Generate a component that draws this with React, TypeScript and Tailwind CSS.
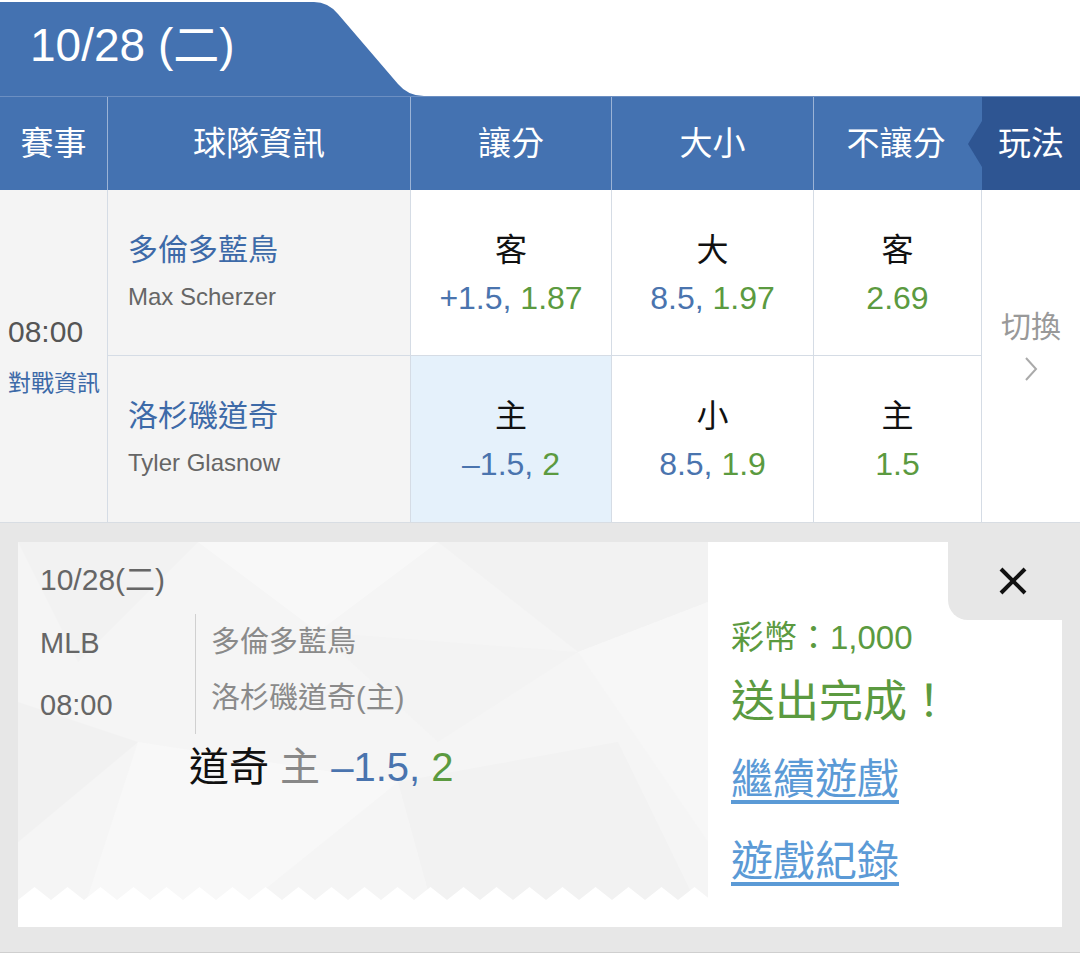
import React from "react";

const FONT = { fontFamily: '"Liberation Sans", "Noto Sans CJK TC", sans-serif' };

function Zigzag() {
  const w = 690;
  const top = 345;
  const bot = 358;
  const period = 33;
  let pts = `0,${bot} `;
  for (let x = 0; x <= w + period; x += period) {
    pts += `${x},${bot} ${x + period / 2},${top} `;
  }
  pts += `${w},${bot} ${w},385 0,385`;
  return <polygon points={pts} fill="#ffffff" />;
}

function TicketBg() {
  return (
    <svg className="absolute inset-0" width="690" height="385" viewBox="0 0 690 385">
      <rect width="690" height="385" fill="#f5f5f5" />
      <polygon points="0,0 180,0 60,120" fill="#f2f2f2" />
      <polygon points="180,0 420,0 300,90" fill="#f8f8f8" />
      <polygon points="420,0 690,0 690,60 560,110" fill="#f2f2f2" />
      <polygon points="0,160 120,200 0,300" fill="#f1f1f1" />
      <polygon points="120,200 380,240 200,385 60,385" fill="#f8f8f8" />
      <polygon points="380,240 600,200 690,385 420,385" fill="#f2f2f2" />
      <polygon points="560,110 690,60 690,300" fill="#f7f7f7" />
      <polygon points="300,90 560,110 420,200" fill="#f3f3f3" />
      <Zigzag />
    </svg>
  );
}

export default function App() {
  return (
    <div className="w-[1080px] h-[959px] bg-white overflow-hidden" style={FONT}>
      {/* Tab */}
      <div className="flex h-[96px] pt-[2px]">
        <div className="w-[300px] h-[94px] bg-[#4472b1] pl-[30px] flex items-center">
          <span className="text-white text-[46px] leading-none pb-[8px]">10/28 (二)</span>
        </div>
        <svg width="130" height="94" viewBox="0 0 130 94" className="block">
          <path d="M0,0 L14,0 Q28,0 38,12 L98,82 Q108,94 124,94 L0,94 Z" fill="#4472b1" />
        </svg>
      </div>

      {/* Header */}
      <div className="grid grid-cols-[108px_303px_201px_202px_168px_98px] h-[94px] bg-[#4472b1] text-white text-[33px] border-t border-[#6c8fc2]">
        <div className="flex items-center justify-center border-r border-[#9bb3d6]">賽事</div>
        <div className="flex items-center justify-center border-r border-[#9bb3d6]">球隊資訊</div>
        <div className="flex items-center justify-center border-r border-[#9bb3d6]">讓分</div>
        <div className="flex items-center justify-center border-r border-[#9bb3d6]">大小</div>
        <div className="flex items-center justify-center pr-[4px]">不讓分</div>
        <div className="relative flex items-center justify-center bg-[#2e5592]">
          <div className="absolute left-[-14px] top-[24px] w-0 h-0 border-y-[23px] border-y-transparent border-r-[14px] border-r-[#2e5592]" />
          玩法
        </div>
      </div>

      {/* Body */}
      <div className="grid grid-cols-[108px_303px_201px_202px_168px_98px] grid-rows-[166px_166px] border-b border-[#d8dde3]">
        <div className="row-span-2 bg-[#f4f4f4] border-r border-[#d5dce5] flex flex-col justify-center pl-[8px]">
          <div className="text-[30px] text-[#555] leading-[36px]">08:00</div>
          <div className="text-[23px] text-[#3d6aa8] leading-[32px] mt-[17px]">對戰資訊</div>
        </div>

        <div className="bg-[#f4f4f4] border-r border-b border-[#d5dce5] pl-[20px] pt-[40px]">
          <div className="text-[30px] text-[#3d6aa8] leading-[40px]">多倫多藍鳥</div>
          <div className="text-[24px] text-[#666] leading-[30px] mt-[12px]">Max Scherzer</div>
        </div>
        <div className="bg-white border-r border-b border-[#d5dce5] flex flex-col items-center pt-[38px]">
          <div className="text-[32px] text-[#111] leading-[44px]">客</div>
          <div className="text-[32px] leading-[40px] mt-[6px]"><span className="text-[#4a74ae]">+1.5, </span><span className="text-[#5b9a40]">1.87</span></div>
        </div>
        <div className="bg-white border-r border-b border-[#d5dce5] flex flex-col items-center pt-[38px]">
          <div className="text-[32px] text-[#111] leading-[44px]">大</div>
          <div className="text-[32px] leading-[40px] mt-[6px]"><span className="text-[#4a74ae]">8.5, </span><span className="text-[#5b9a40]">1.97</span></div>
        </div>
        <div className="bg-white border-r border-b border-[#d5dce5] flex flex-col items-center pt-[38px]">
          <div className="text-[32px] text-[#111] leading-[44px]">客</div>
          <div className="text-[32px] leading-[40px] mt-[6px] text-[#5b9a40]">2.69</div>
        </div>
        <div className="row-span-2 bg-white flex flex-col items-center justify-center pb-[22px]">
          <div className="text-[30px] text-[#999] leading-[40px]">切換</div>
          <svg width="16" height="28" viewBox="0 0 16 28" className="mt-[8px]">
            <polyline points="3,3 13,14 3,25" fill="none" stroke="#aaa" strokeWidth="2" />
          </svg>
        </div>

        <div className="bg-[#f4f4f4] border-r border-[#d5dce5] pl-[20px] pt-[40px]">
          <div className="text-[30px] text-[#3d6aa8] leading-[40px]">洛杉磯道奇</div>
          <div className="text-[24px] text-[#666] leading-[30px] mt-[12px]">Tyler Glasnow</div>
        </div>
        <div className="bg-[#e5f1fb] border-r border-[#d5dce5] flex flex-col items-center pt-[38px]">
          <div className="text-[32px] text-[#111] leading-[44px]">主</div>
          <div className="text-[32px] leading-[40px] mt-[6px]"><span className="text-[#4a74ae]">–1.5, </span><span className="text-[#5b9a40]">2</span></div>
        </div>
        <div className="bg-white border-r border-[#d5dce5] flex flex-col items-center pt-[38px]">
          <div className="text-[32px] text-[#111] leading-[44px]">小</div>
          <div className="text-[32px] leading-[40px] mt-[6px]"><span className="text-[#4a74ae]">8.5, </span><span className="text-[#5b9a40]">1.9</span></div>
        </div>
        <div className="bg-white border-r border-[#d5dce5] flex flex-col items-center pt-[38px]">
          <div className="text-[32px] text-[#111] leading-[44px]">主</div>
          <div className="text-[32px] leading-[40px] mt-[6px] text-[#5b9a40]">1.5</div>
        </div>
      </div>

      {/* Bottom panel */}
      <div className="bg-[#e7e7e7] pt-[19px] pb-[25px] px-[18px] border-b border-[#cfcfcf]">
        <div className="relative flex h-[385px] bg-white">
          <div className="relative w-[690px] h-[385px]">
            <TicketBg />
            <div className="relative pl-[22px] pt-[20px]">
              <div className="text-[30px] text-[#666] leading-[36px]">10/28(二)</div>
              <div className="flex mt-[16px]">
                <div className="w-[155px] text-[29px] text-[#666]">
                  <div className="leading-[58px]">MLB</div>
                  <div className="leading-[58px] mt-[4px]">08:00</div>
                </div>
                <div className="border-l border-[#d0d0d0] pl-[15px] text-[29px] text-[#8a8a8a]">
                  <div className="leading-[56px]">多倫多藍鳥</div>
                  <div className="leading-[56px]">洛杉磯道奇(主)</div>
                </div>
              </div>
              <div className="ml-[149px] mt-[8px] text-[40px] leading-[50px]">
                <span className="text-[#111]">道奇</span>
                <span className="text-[#888]"> 主 </span>
                <span className="text-[#4a74ae]">–1.5, </span>
                <span className="text-[#5b9a40]">2</span>
              </div>
            </div>
          </div>
          <div className="flex-1 pl-[23px] pt-[74px]">
            <div className="text-[33px] text-[#5b9a40] leading-[44px]">彩幣：1,000</div>
            <div className="text-[44px] text-[#5b9a40] leading-[56px] mt-[14px]">送出完成！</div>
            <div className="text-[42px] text-[#5b9ad6] underline underline-offset-[6px] leading-[52px] mt-[24px]">繼續遊戲</div>
            <div className="text-[42px] text-[#5b9ad6] underline underline-offset-[6px] leading-[52px] mt-[30px]">遊戲紀錄</div>
          </div>
          <div className="absolute top-0 right-0 w-[114px] h-[78px] bg-[#e7e7e7] rounded-bl-[20px] flex items-center justify-center pl-[16px]">
            <svg width="30" height="30" viewBox="0 0 30 30">
              <line x1="3" y1="3" x2="27" y2="27" stroke="#111" strokeWidth="4" />
              <line x1="27" y1="3" x2="3" y2="27" stroke="#111" strokeWidth="4" />
            </svg>
          </div>
        </div>
      </div>
    </div>
  );
}
